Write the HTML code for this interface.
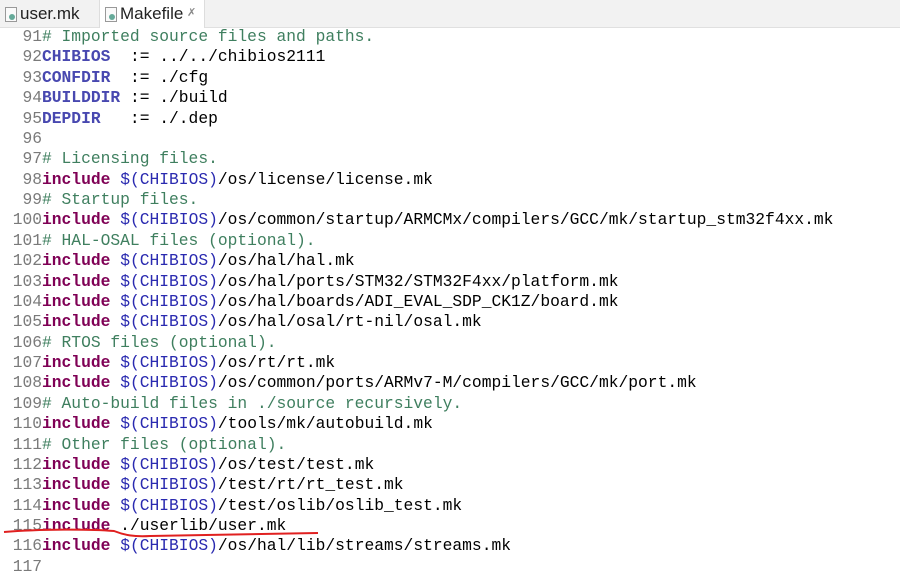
<!DOCTYPE html>
<html><head><style>
body{margin:0;width:900px;height:575px;overflow:hidden;background:#fff;font-family:"Liberation Mono",monospace;}
.tabs{position:absolute;left:0;top:0;width:900px;height:27px;background:#f2f2f2;border-bottom:1px solid #e0e0e0;font-family:"Liberation Sans",sans-serif;font-size:17px;}
.tab{position:absolute;top:0;height:27px;line-height:27px;color:#222;}
.t1{left:0;width:98px;}
.t2{left:99px;width:104px;background:#fff;border-left:1px solid #ddd;border-right:1px solid #ddd;height:28px;}
.ic{position:absolute;top:7px;width:10px;height:13px;border:1px solid #999;background:#fafafa;}
.ic:after{content:"";position:absolute;left:3px;top:6px;width:6px;height:6px;border-radius:50%;background:#6a9;}
.code{position:absolute;left:0;top:27px;}
.l{height:20.38px;line-height:20.38px;font-size:16.3px;white-space:pre;position:relative;}
.n{display:inline-block;width:42px;text-align:right;color:#7a7a7a;}
.k{color:#7f0055;font-weight:bold;}
.c{color:#3f7f5f;}
.v{color:#2a2ab0;}
.d{color:#4848b0;font-weight:bold;}
</style></head><body>
<div class="tabs">
<div class="tab t1"><span class="ic" style="left:5px"></span><span style="position:absolute;left:20px">user.mk</span></div>
<div class="tab t2"><span class="ic" style="left:5px"></span><span style="position:absolute;left:20px">Makefile</span><span style="position:absolute;left:87px;font-size:11px;color:#888">&#x2717;</span></div>
</div>
<div class="code">
<div class="l"><span class="n">91</span><span class="c"># Imported source files and paths.</span></div>
<div class="l"><span class="n">92</span><span class="d">CHIBIOS</span>  := ../../chibios2111</div>
<div class="l"><span class="n">93</span><span class="d">CONFDIR</span>  := ./cfg</div>
<div class="l"><span class="n">94</span><span class="d">BUILDDIR</span> := ./build</div>
<div class="l"><span class="n">95</span><span class="d">DEPDIR</span>   := ./.dep</div>
<div class="l"><span class="n">96</span></div>
<div class="l"><span class="n">97</span><span class="c"># Licensing files.</span></div>
<div class="l"><span class="n">98</span><span class="k">include</span> <span class="v">$(CHIBIOS)</span>/os/license/license.mk</div>
<div class="l"><span class="n">99</span><span class="c"># Startup files.</span></div>
<div class="l"><span class="n">100</span><span class="k">include</span> <span class="v">$(CHIBIOS)</span>/os/common/startup/ARMCMx/compilers/GCC/mk/startup_stm32f4xx.mk</div>
<div class="l"><span class="n">101</span><span class="c"># HAL-OSAL files (optional).</span></div>
<div class="l"><span class="n">102</span><span class="k">include</span> <span class="v">$(CHIBIOS)</span>/os/hal/hal.mk</div>
<div class="l"><span class="n">103</span><span class="k">include</span> <span class="v">$(CHIBIOS)</span>/os/hal/ports/STM32/STM32F4xx/platform.mk</div>
<div class="l"><span class="n">104</span><span class="k">include</span> <span class="v">$(CHIBIOS)</span>/os/hal/boards/ADI_EVAL_SDP_CK1Z/board.mk</div>
<div class="l"><span class="n">105</span><span class="k">include</span> <span class="v">$(CHIBIOS)</span>/os/hal/osal/rt-nil/osal.mk</div>
<div class="l"><span class="n">106</span><span class="c"># RTOS files (optional).</span></div>
<div class="l"><span class="n">107</span><span class="k">include</span> <span class="v">$(CHIBIOS)</span>/os/rt/rt.mk</div>
<div class="l"><span class="n">108</span><span class="k">include</span> <span class="v">$(CHIBIOS)</span>/os/common/ports/ARMv7-M/compilers/GCC/mk/port.mk</div>
<div class="l"><span class="n">109</span><span class="c"># Auto-build files in ./source recursively.</span></div>
<div class="l"><span class="n">110</span><span class="k">include</span> <span class="v">$(CHIBIOS)</span>/tools/mk/autobuild.mk</div>
<div class="l"><span class="n">111</span><span class="c"># Other files (optional).</span></div>
<div class="l"><span class="n">112</span><span class="k">include</span> <span class="v">$(CHIBIOS)</span>/os/test/test.mk</div>
<div class="l"><span class="n">113</span><span class="k">include</span> <span class="v">$(CHIBIOS)</span>/test/rt/rt_test.mk</div>
<div class="l"><span class="n">114</span><span class="k">include</span> <span class="v">$(CHIBIOS)</span>/test/oslib/oslib_test.mk</div>
<div class="l"><span class="n">115</span><span class="k">include</span> ./userlib/user.mk</div>
<div class="l"><span class="n">116</span><span class="k">include</span> <span class="v">$(CHIBIOS)</span>/os/hal/lib/streams/streams.mk</div>
<div class="l"><span class="n">117</span></div>
</div>
<svg style="position:absolute;left:0;top:520px" width="330" height="25"><path d="M4 12 C40 9 90 9 114 11 C124 15 134 17 150 16 L318 13" stroke="#e02020" stroke-width="2" fill="none"/></svg>
</body></html>
